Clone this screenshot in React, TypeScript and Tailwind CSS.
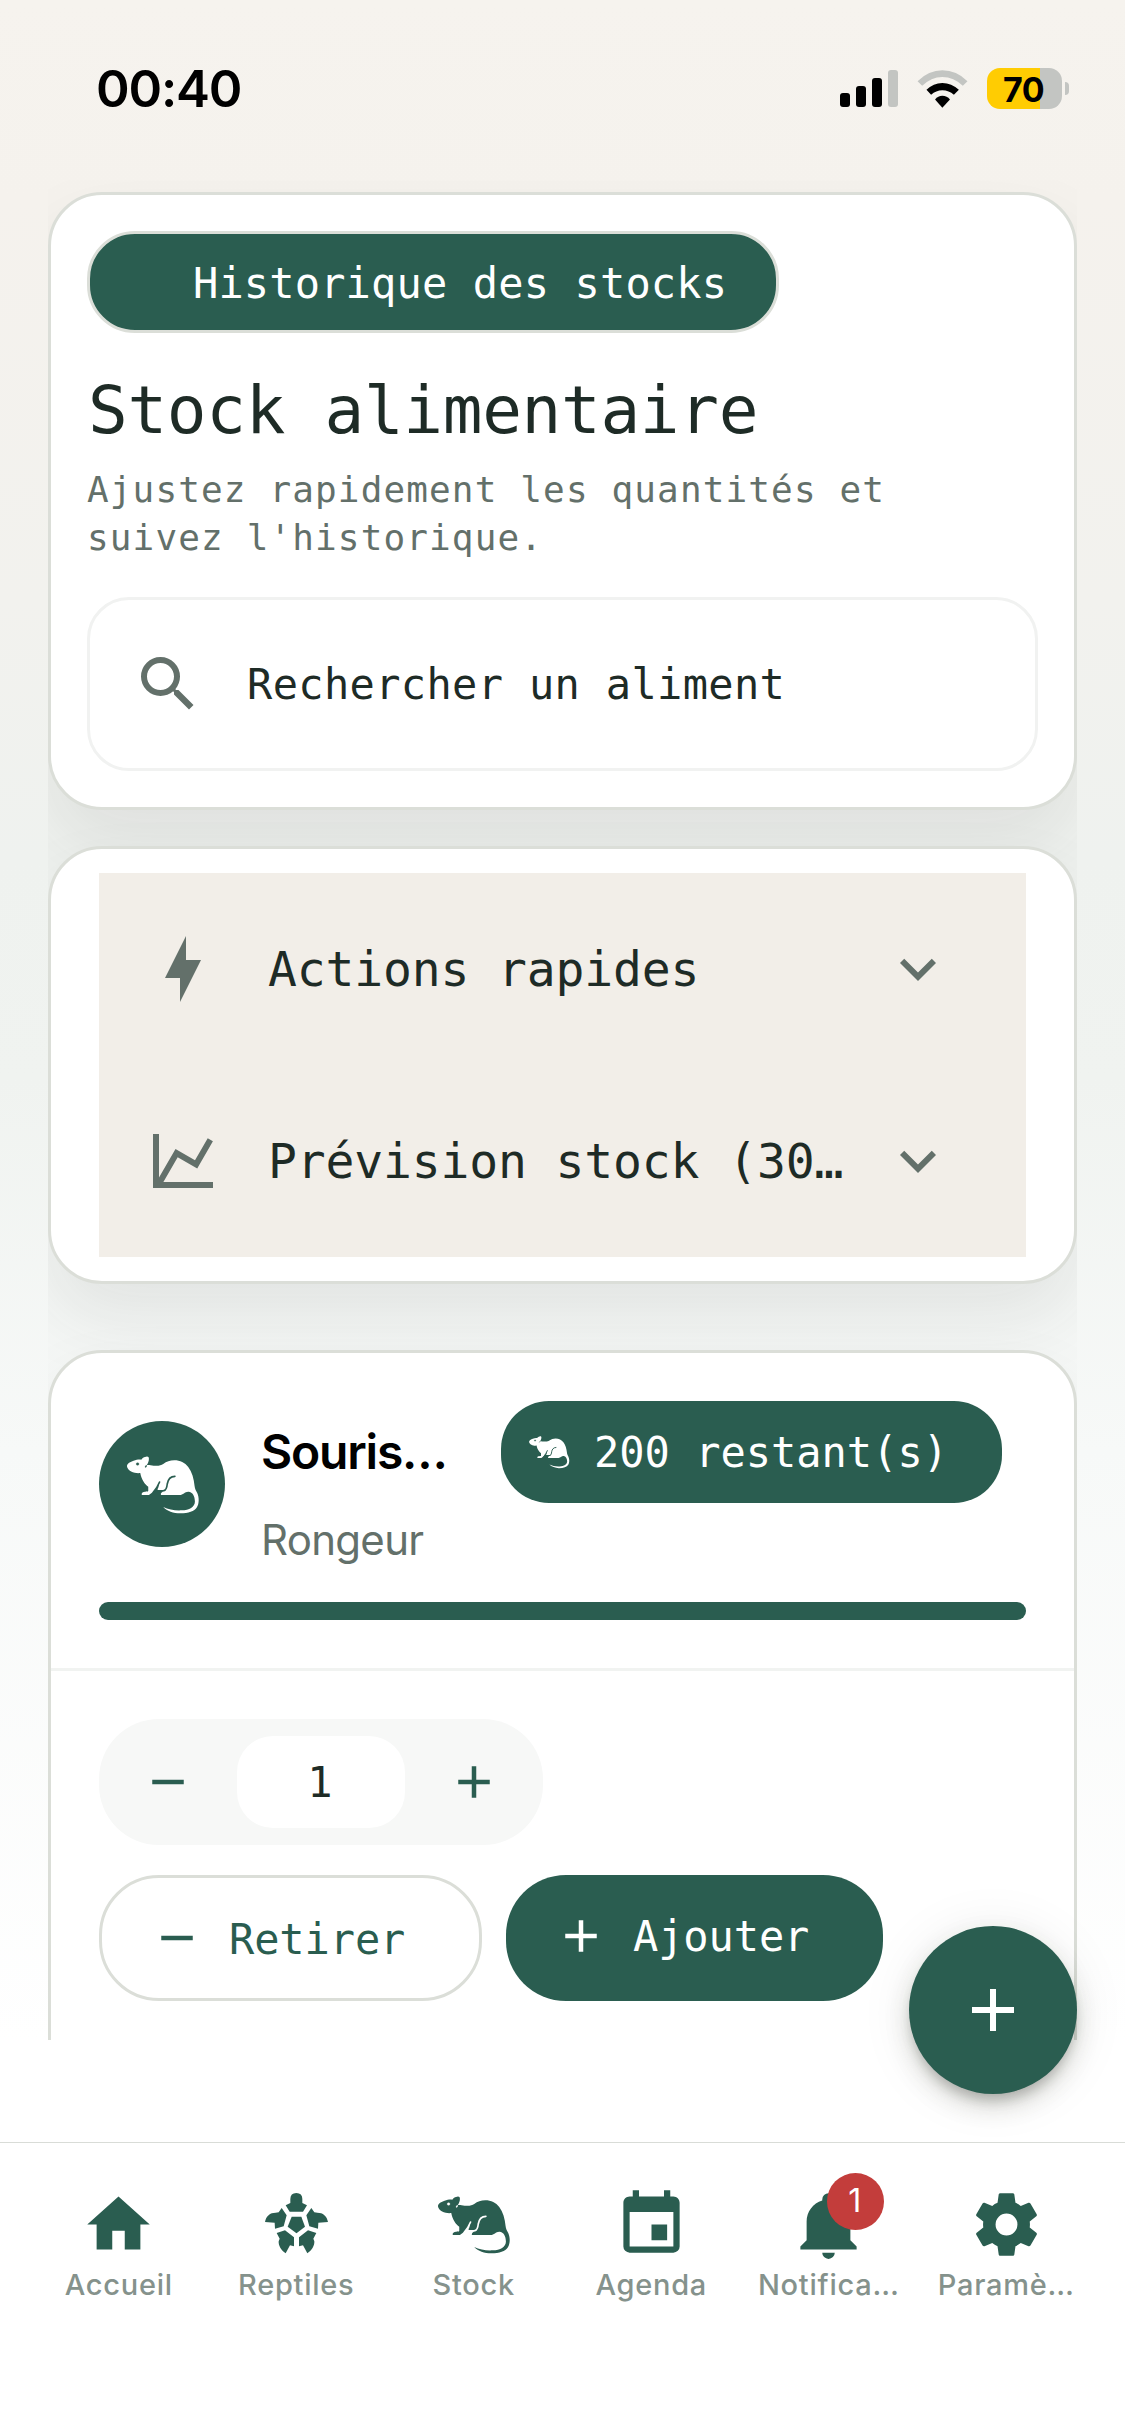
import type { ReactNode } from "react";

const MONO = "font-['DejaVu_Sans_Mono',monospace]";

const paths = {
  magnify:
    "M9.5,3A6.5,6.5 0 0,1 16,9.5C16,11.11 15.41,12.59 14.44,13.73L14.71,14H15.5L20.5,19L19,20.5L14,15.5V14.71L13.73,14.44C12.59,15.41 11.11,16 9.5,16A6.5,6.5 0 0,1 3,9.5A6.5,6.5 0 0,1 9.5,3M9.5,5C7,5 5,7 5,9.5C5,12 7,14 9.5,14C12,14 14,12 14,9.5C14,7 12,5 9.5,5Z",
  flash: "M11,15H6L13,1V9H18L11,23V15Z",
  chart:
    "M16,11.78L20.24,4.45L21.97,5.45L16.74,14.5L10.23,10.75L5.46,19H22V21H2V3H4V17.54L9.5,8L16,11.78Z",
  chevron: "M7.41,8.58L12,13.17L16.59,8.58L18,10L12,16L6,10L7.41,8.58Z",
  minus: "M19,13H5V11H19V13Z",
  plus: "M19,13H13V19H11V13H5V11H11V5H13V11H19V13Z",
  home: "M10,20V14H14V20H19V12H22L12,3L2,12H5V20H10Z",
  calendar:
    "M19,19H5V8H19M16,1V3H8V1H6V3H5C3.89,3 3,3.89 3,5V19A2,2 0 0,0 5,21H19A2,2 0 0,0 21,19V5C21,3.89 20.1,3 19,3H18V1M17,12H12V17H17V12Z",
  bell: "M21,19V20H3V19L5,17V11C5,7.9 7.03,5.17 10,4.29C10,4.19 10,4.1 10,4A2,2 0 0,1 12,2A2,2 0 0,1 14,4C14,4.1 14,4.19 14,4.29C16.97,5.17 19,7.9 19,11V17L21,19M14,21A2,2 0 0,1 12,23A2,2 0 0,1 10,21",
  cog: "M12,15.5A3.5,3.5 0 0,1 8.5,12A3.5,3.5 0 0,1 12,8.5A3.5,3.5 0 0,1 15.5,12A3.5,3.5 0 0,1 12,15.5M19.43,12.97C19.47,12.65 19.5,12.33 19.5,12C19.5,11.67 19.47,11.34 19.43,11L21.54,9.37C21.73,9.22 21.78,8.95 21.66,8.73L19.66,5.27C19.54,5.05 19.27,4.96 19.05,5.05L16.56,6.05C16.04,5.66 15.5,5.32 14.87,5.07L14.5,2.42C14.46,2.18 14.25,2 14,2H10C9.75,2 9.54,2.18 9.5,2.42L9.13,5.07C8.5,5.32 7.96,5.66 7.44,6.05L4.95,5.05C4.73,4.96 4.46,5.05 4.34,5.27L2.34,8.73C2.21,8.95 2.27,9.22 2.46,9.37L4.57,11C4.53,11.34 4.5,11.67 4.5,12C4.5,12.33 4.53,12.65 4.57,12.97L2.46,14.63C2.27,14.78 2.21,15.05 2.34,15.27L4.34,18.73C4.46,18.95 4.73,19.03 4.95,18.95L7.44,17.94C7.96,18.34 8.5,18.68 9.13,18.93L9.5,21.58C9.54,21.82 9.75,22 10,22H14C14.25,22 14.46,21.82 14.5,21.58L14.87,18.93C15.5,18.67 16.04,18.34 16.56,17.94L19.05,18.95C19.27,19.03 19.54,18.95 19.66,18.73L21.66,15.27C21.78,15.05 21.73,14.78 21.54,14.63L19.43,12.97Z",
};

function Icon({ name, className }: { name: keyof typeof paths; className: string }) {
  return (
    <svg viewBox="0 0 24 24" fill="currentColor" className={`shrink-0 ${className}`}>
      <path d={paths[name]} />
    </svg>
  );
}

// `cut` is the colour behind the animal, used for its eye and leg outline.
function Rat({ className, cut }: { className: string; cut: string }) {
  return (
    <svg viewBox="542.25 5 225 225" fill="currentColor" className={`shrink-0 ${className}`}>
      <path d="M548 62C549 54 558 49 568 46C577 43 585 41 591 43C594 37 601 34 606 34C611 33 614 35 614 40C614 48 611 54 607 60C612 58 620 61 628 61C642 62 650 61 657 56C667 49 677 45 690 45C708 45 722 52 732 65C743 80 749 100 751 122C752 131 755 136 759 143C765 156 765 175 758 186C750 198 733 204 708 204C688 204 668 197 657 185C673 193 692 196 712 195C736 194 751 185 752 169C752 152 745 140 733 139C722 138 717 149 706 149H650C648 143 654 139 662 137C665 136 664 136 664 134H641C639 132 640 130 642 127L645 114C638 126 631 138 622 143L614 149H593C591 146 593 142 598 140C604 138 610 140 612 137V124C602 117 592 104 588 83C575 85 550 80 548 62Z" />
      <circle cx="580" cy="56" r="4" className={cut} stroke="none" />
      <path d="M607 60L603 66" fill="none" strokeWidth="4" className={cut} />
      <path
        d="M692 93C678 93 671 104 669 116C668 126 667 134 659 136M646 110C641 122 635 132 627 141"
        strokeWidth="5"
        strokeLinecap="round"
        className={cut}
        style={{ fill: "none" }}
      />
    </svg>
  );
}

function TurtleHalf() {
  return (
    <>
      <path d="M30 110C33 92 45 82 62 82L71 81L80 68L95 90L86 123L60 130L59 112Z" />
      <path d="M65 143L90 135L117 156V183L105 180L92 204C78 195 70 180 71 168L74 160Z" />
    </>
  );
}

function Turtle({ className }: { className: string }) {
  return (
    <svg viewBox="12 5 225 225" fill="currentColor" className={`shrink-0 ${className}`}>
      <path d="M106 53V41Q106 23 124 23Q142 23 142 41V53L156 60L144 79H104L92 60Z" />
      <path d="M110 94H139L150 124L124.5 144L98 124Z" />
      <TurtleHalf />
      <g transform="translate(249 0) scale(-1 1)">
        <TurtleHalf />
      </g>
    </svg>
  );
}

function StatusBar() {
  return (
    <header className="flex h-[180px] shrink-0 items-start justify-between pt-[68px] pr-[56px] pl-[96px] text-black">
      <div className="flex h-[43px] items-center text-[51px] font-semibold tracking-[-1.2px]">00:40</div>
      <div className="flex h-[41px] items-center">
        <div className="flex h-[37px] items-end gap-1.5">
          <i className="h-[14px] w-[10px] rounded-[3px] bg-black" />
          <i className="h-[21px] w-[10px] rounded-[3px] bg-black" />
          <i className="h-[29px] w-[10px] rounded-[3px] bg-black" />
          <i className="h-[37px] w-[10px] rounded-[3px] bg-[#c3c5c2]" />
        </div>
        <svg viewBox="291 43 153 115" className="ml-[19px] h-[38px] w-[51px]">
          <path fill="#c3c5c2" d="M292 77Q326 44 367 44Q410 44 443 77L429 91Q402 64 367 64Q333 64 306 91Z" />
          <path d="M319 103Q340 82 367 82Q395 82 417 103L402 118Q387 104 367 104Q348 104 333 118Z" />
          <path d="M345 132Q354 121 367 121Q381 121 390 132L367 157Z" />
        </svg>
        <div className="ml-[19px] flex h-[41px] w-[75px] items-center justify-center rounded-[13px] bg-[linear-gradient(90deg,#ffcc02_53px,#c3c5c2_53px)] pt-px pr-[2px] text-[34px] font-bold tracking-[-0.5px]">
          70
        </div>
        <i className="ml-[3px] h-[13px] w-1 rounded-r-full bg-[#c3c5c2]" />
      </div>
    </header>
  );
}

function Card({ className, children }: { className: string; children: ReactNode }) {
  return (
    <section
      className={`shrink-0 rounded-[54px] border-[3px] border-[#dbded8] bg-white shadow-[0_36px_72px_rgba(45,50,45,0.085)] ${className}`}
    >
      {children}
    </section>
  );
}

function Row({ icon, label }: { icon: "flash" | "chart"; label: string }) {
  return (
    <div className="flex h-48 items-center pr-[72px] pl-12">
      <Icon name={icon} className="size-[72px] text-[#63706a]" />
      <span className={`${MONO} ml-[49px] flex-1 text-[48px] tracking-[-0.14px] whitespace-nowrap text-[#1e2b26]`}>
        {label}
      </span>
      <Icon name="chevron" className="size-[72px] text-[#63706a]" />
    </div>
  );
}

function Tab({ label, children }: { label: string; children: ReactNode }) {
  return (
    <div className="flex flex-1 flex-col items-center">
      <div className="relative flex size-[75px]">{children}</div>
      <span className="mt-[5px] text-[29px] leading-[36px] font-medium tracking-[0.75px] whitespace-nowrap text-[#85928c]">
        {label}
      </span>
    </div>
  );
}

export default function App() {
  return (
    <div className="relative flex h-[2436px] w-[1125px] flex-col overflow-hidden bg-[linear-gradient(180deg,#f6f3ee_0px,#f5f2ed_200px,#f2f2ee_600px,#eff2ef_860px,#f0f3f0_1080px,#f7f9f8_1450px,#ffffff_2040px)] font-['Inter',sans-serif]">
      <StatusBar />

      <main className="mx-12 flex h-[1860px] shrink-0 flex-col overflow-hidden pt-3">
        <Card className="h-[618px] p-9">
          <div
            className={`${MONO} flex h-[102px] w-[692px] items-center rounded-[48px] border-[3px] border-[#dbded8] bg-[#2a5d50] pt-[3px] pl-[103px] text-[42px] tracking-[0.15px] whitespace-nowrap text-white`}
          >
            Historique des stocks
          </div>
          <h1 className={`${MONO} mt-9 pl-px text-[66px] leading-[84px] tracking-[-0.32px] text-[#1e2b26]`}>
            Stock alimentaire
          </h1>
          <p className={`${MONO} mt-[13px] text-[36px] leading-[48px] tracking-[1.13px] text-[#63706a]`}>
            Ajustez rapidement les quantités et
            <br />
            suivez l'historique.
          </p>
          <div className="mt-[35px] flex h-[174px] items-center rounded-[42px] border-[3px] border-[#f1f2f1] pl-[42px]">
            <Icon name="magnify" className="size-[72px] text-[#63706a]" />
            <span className={`${MONO} ml-[43px] text-[42px] tracking-[0.34px] text-[#1e2b26]`}>
              Rechercher un aliment
            </span>
          </div>
        </Card>

        <Card className="mt-9 h-[438px] px-12 py-6">
          <div className="bg-[#f2eee8]">
            <Row icon="flash" label="Actions rapides" />
            <Row icon="chart" label="Prévision stock (30…" />
          </div>
        </Card>

        <Card className="mt-[66px] h-[900px]">
          <div className="border-b-[3px] border-[#f1f3f1] p-12">
            <div className="flex h-[166px] items-center">
              <div className="flex size-[126px] shrink-0 items-center justify-center rounded-full bg-[#2a5d50] text-white">
                <Rat className="size-[75px]" cut="fill-[#2a5d50] stroke-[#2a5d50]" />
              </div>
              <div className="ml-9 flex-1">
                <div className="flex items-center">
                  <span className="w-[240px] text-[48px] font-semibold tracking-[-1.2px] text-black">Souris…</span>
                  <div className="flex h-[102px] w-[501px] items-center rounded-[48px] bg-[#2a5d50] pl-[27px] text-white">
                    <Rat className="size-[42px]" cut="fill-[#2a5d50] stroke-[#2a5d50]" />
                    <span className={`${MONO} ml-6 pt-px text-[42px] whitespace-nowrap`}>200 restant(s)</span>
                  </div>
                </div>
                <div className="mt-[9px] -mb-px text-[42px] leading-[56px] tracking-[-0.7px] text-[#63706a]">
                  Rongeur
                </div>
              </div>
            </div>
            <div className="mt-[35px] h-[18px] rounded-[9px] bg-[#2a5d50]" />
          </div>

          <div className="p-12">
            <div className="flex h-[126px] w-[444px] items-center justify-between rounded-[60px] bg-[#f7f8f7] px-[42px] text-[#2a5d50]">
              <Icon name="minus" className="size-[54px]" />
              <span
                className={`${MONO} flex h-[92px] w-[168px] items-center justify-center rounded-[36px] bg-white pr-[2px] text-[42px] text-[#1e2b26]`}
              >
                1
              </span>
              <Icon name="plus" className="size-[54px]" />
            </div>
            <div className="mt-[30px] flex gap-6">
              <div className="flex h-[126px] w-[383px] items-center rounded-[60px] border-[3px] border-[#dbded8] pl-12 text-[#2a5d50]">
                <Icon name="minus" className="size-[54px]" />
                <span className={`${MONO} ml-[25px] pt-[3px] text-[42px] tracking-[-0.1px]`}>Retirer</span>
              </div>
              <div className="flex h-[126px] w-[377px] items-center rounded-[60px] bg-[#2a5d50] pb-1 pl-12 text-white">
                <Icon name="plus" className="size-[54px]" />
                <span className={`${MONO} ml-[25px] pt-px text-[42px] tracking-[-0.1px]`}>Ajouter</span>
              </div>
            </div>
          </div>
        </Card>
      </main>

      <div className="absolute top-[1926px] left-[909px] flex size-[168px] items-center justify-center rounded-full bg-[#2a5d50] text-white shadow-[0_9px_12px_-3px_rgba(0,0,0,0.2),0_12px_24px_rgba(60,60,40,0.18),0_3px_54px_rgba(0,40,20,0.08)]">
        <Icon name="plus" className="size-[72px]" />
      </div>

      <nav className="mt-[102px] flex h-[294px] shrink-0 border-t border-[#d9dcd7] bg-white px-[30px] pt-[43.5px] text-[#2a5d50]">
        <Tab label="Accueil">
          <Icon name="home" className="size-[75px]" />
        </Tab>
        <Tab label="Reptiles">
          <Turtle className="size-[75px]" />
        </Tab>
        <Tab label="Stock">
          <Rat className="size-[75px]" cut="fill-white stroke-white" />
        </Tab>
        <Tab label="Agenda">
          <Icon name="calendar" className="size-[75px]" />
        </Tab>
        <Tab label="Notifica…">
          <Icon name="bell" className="size-[75px]" />
          <span className="absolute -top-[14px] left-[36px] flex size-[57px] items-center justify-center rounded-full bg-[#c33d3b] pr-[2px] text-[32px] text-white">
            1
          </span>
        </Tab>
        <Tab label="Paramè…">
          <Icon name="cog" className="size-[75px]" />
        </Tab>
      </nav>
    </div>
  );
}
